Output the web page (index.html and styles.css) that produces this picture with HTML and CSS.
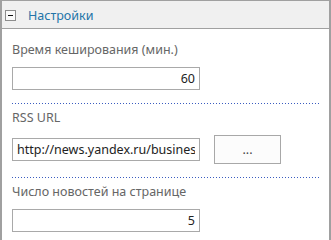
FILE: index.html
```html
<!DOCTYPE html>
<html lang="ru">
<head>
  <meta charset="UTF-8">
  <title>Настройки</title>
  <link rel="stylesheet" href="styles.css">
</head>
<body>
  <div class="panel">
    <div class="panel-header">
      <span class="collapse-box"></span>
      <span class="panel-title">Настройки</span>
    </div>

    <div class="field first">
      <div class="field-label">Время кеширования (мин.)</div>
      <div class="field-row">
        <input type="text" class="text-input number" value="60">
      </div>
    </div>
    <div class="separator"></div>

    <div class="field">
      <div class="field-label">RSS URL</div>
      <div class="field-row">
        <input type="text" class="text-input" value="http://news.yandex.ru/business.rss">
        <button class="browse-button">...</button>
      </div>
    </div>
    <div class="separator"></div>

    <div class="field">
      <div class="field-label">Число новостей на странице</div>
      <div class="field-row">
        <input type="text" class="text-input number" value="5">
      </div>
    </div>
  </div>
</body>
</html>
```

FILE: styles.css
```css
body {
  margin: 0;
  padding: 0;
  background-color: white;
  font-family: 'Noto Sans', 'Open Sans', sans-serif;
  font-size: 12.5px;
}
.panel {
  width: 331px;
  height: 240px;
  overflow: hidden;
  box-sizing: border-box;
  border: 2px solid #a0a0a0;
  border-bottom: none;
  border-top-width: 1px;
}
.panel-header {
  height: 27px;
  background-color: #f0f0f0;
  border-bottom: 1px solid #a0a0a0;
  display: flex;
  align-items: center;
}
.collapse-box {
  width: 9px;
  height: 9px;
  margin-left: 3px;
  margin-top: 2px;
  border: 1px solid #8c8c8c;
  background-color: #fafafa;
  position: relative;
}
.collapse-box::after {
  content: "";
  position: absolute;
  left: 2px;
  top: 4px;
  width: 5px;
  height: 1px;
  background-color: #111;
}
.panel-title {
  margin-left: 12px;
  margin-top: 1px;
  color: #2374a8;
}
.field {
  padding: 5px 0 13px 10px;
}
.field.first {
  padding-top: 12px;
}
.field-label {
  color: #666;
  line-height: 18px;
  margin-bottom: 8px;
}
.field-row {
  display: flex;
  align-items: center;
}
.text-input {
  width: 188px;
  height: 23px;
  box-sizing: border-box;
  border: 1px solid #a9a9a9;
  padding: 0 4px;
  font-family: inherit;
  font-size: 12.5px;
  color: #222;
  background-color: white;
  outline: none;
}
.number {
  text-align: right;
}
.browse-button {
  width: 67px;
  height: 29px;
  margin-left: 14px;
  border: 1px solid #a8a8a8;
  background-color: #fcfcfc;
  font-family: inherit;
  font-size: 12.5px;
  color: #444;
  padding: 0;
}
.separator {
  height: 1px;
  margin: 0 10px 0 10px;
  background-image: linear-gradient(to right, #3a5cc0 1px, transparent 1px);
  background-size: 3px 1px;
}
```
